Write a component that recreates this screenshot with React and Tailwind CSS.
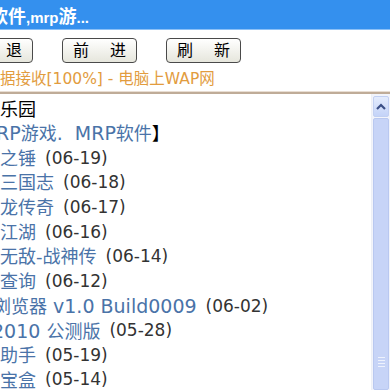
const items = [
  { name: '之锤', date: '(06-19)', shift: 0 },
  { name: '三国志', date: '(06-18)', shift: 0 },
  { name: '龙传奇', date: '(06-17)', shift: 0 },
  { name: '江湖', date: '(06-16)', shift: 0 },
  { name: '无敌-战神传', date: '(06-14)', shift: 0 },
  { name: '查询', date: '(06-12)', shift: 0 },
  { name: '浏览器', latin: ' v1.0 Build0009', date: '(06-02)', shift: 1 },
  { latin: '2010 ', name: '公测版', date: '(05-28)', shift: 2 },
  { name: '助手', date: '(05-19)', shift: 0 },
  { name: '宝盒', date: '(05-14)', shift: 0 },
]

const cjk = { fontFamily: '"DejaVu Sans", "Noto Sans CJK SC", sans-serif' }

function NavButton({ left, right }) {
  return (
    <div className="flex h-[25px] w-[75px] shrink-0 items-center justify-between rounded-[4px] border border-[#4a4a4a] bg-gradient-to-b from-white to-[#e6e6dc] px-[10px] text-[16px] text-black">
      <span>{left}</span>
      <span>{right}</span>
    </div>
  )
}

function Scrollbar() {
  return (
    <div className="flex w-[19px] shrink-0 flex-col border-l border-[#eef0f6] bg-[#f2f4fb]">
      <div className="mx-[1px] mt-[2px] flex h-[21px] items-center justify-center rounded-[2px] border border-[#c2d0f2] bg-gradient-to-b from-[#e4ecfd] to-[#c4d3f8]">
        <svg width="10" height="7" viewBox="0 0 10 7">
          <path d="M1 6 L5 2 L9 6" fill="none" stroke="#3b4f86" strokeWidth="2.2" />
        </svg>
      </div>
      <div className="mx-[1px] mt-[1px] flex flex-1 flex-col items-center justify-end rounded-[2px] border border-[#b9c8f0] bg-[#c7d4f7] pb-[22px]">
        <div className="flex flex-col gap-[2px]">
          <div className="h-[1px] w-[7px] bg-[#eef2fd]" />
          <div className="h-[1px] w-[7px] bg-[#eef2fd]" />
          <div className="h-[1px] w-[7px] bg-[#eef2fd]" />
          <div className="h-[1px] w-[7px] bg-[#eef2fd]" />
        </div>
      </div>
    </div>
  )
}

export default function App() {
  return (
    <div className="flex h-[390px] w-[390px] flex-col overflow-hidden bg-white" style={cjk}>
      {/* title bar */}
      <div className="flex h-[30px] shrink-0 items-center border-b border-[#8cc0f6] bg-[#3490ee] pt-[3px]">
        <span className="-ml-[10px] whitespace-nowrap font-bold text-white">
          <span className="text-[18px]">软件</span>
          <span className="font-['Liberation_Sans'] text-[15px]">,mrp</span>
          <span className="text-[18px]">游</span>
          <span className="font-['Liberation_Sans'] text-[15px]">...</span>
        </span>
      </div>

      {/* nav buttons */}
      <div className="flex h-[38px] shrink-0 items-center gap-[29px] pt-[3px] -ml-[42px]">
        <NavButton left="后" right="退" />
        <NavButton left="前" right="进" />
        <NavButton left="刷" right="新" />
      </div>

      {/* status */}
      <div className="flex h-[23px] shrink-0 items-center whitespace-nowrap text-[15.5px] text-[#e29c3e]">
        <span>据接收[100%] - 电脑上WAP网</span>
      </div>

      <div className="h-[1px] shrink-0 bg-[#e9ded3]" />
      <div className="h-[2px] shrink-0 bg-[#bfac98]" />

      {/* content */}
      <div className="flex min-h-0 flex-1">
        <div className="flex-1 overflow-hidden whitespace-nowrap pt-[2px]">
          <div className="h-[24px] pt-[2px] text-[18px] leading-[24px] text-black">乐园</div>
          <div className="-ml-[4px] flex h-[26px] items-center text-[18px] text-[#4a73a8]">
            <span className="text-[19px]">RP</span>
            <span>游戏</span>
            <span className="text-[19px]">.&nbsp;&nbsp;MRP</span>
            <span>软件</span>
            <span className="text-black">】</span>
          </div>
          {items.map((it) => (
            <div
              key={it.date}
              className={`flex h-[24.67px] items-center gap-[9px] ${it.shift === 1 ? '-ml-[7px]' : ''} ${it.shift === 2 ? '-ml-[8px]' : ''}`}
            >
              <span className="text-[18px] text-[#4a73a8]">
                {it.shift === 2 && <span className="text-[19px]">{it.latin}</span>}
                {it.name}
                {it.shift === 1 && <span className="text-[19px]">{it.latin}</span>}
              </span>
              <span className="text-[17px] text-[#333]">{it.date}</span>
            </div>
          ))}
        </div>
        <Scrollbar />
      </div>
    </div>
  )
}
